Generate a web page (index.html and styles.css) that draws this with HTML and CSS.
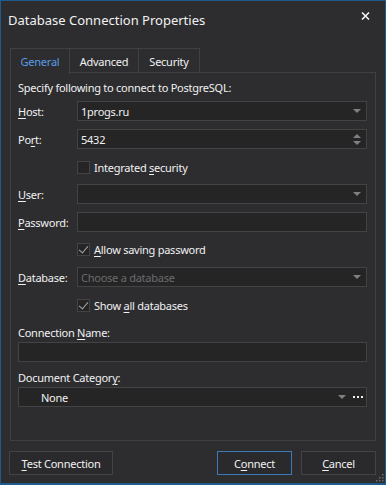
FILE: index.html
```html
<!DOCTYPE html>
<html lang="en">
<head>
    <meta charset="UTF-8">
    <meta name="viewport" content="width=device-width, initial-scale=1.0">
    <title>Database Connection Properties</title>
    <link rel="stylesheet" href="styles.css">
</head>
<body>
    <div class="window">
        <div class="titlebar">
            <span class="title">Database Connection Properties</span>
            <svg class="close" width="9" height="8" viewBox="0 0 9 8">
                <path d="M1 0.5 L8 7.5 M8 0.5 L1 7.5" stroke="#f1f1f1" stroke-width="1.6"/>
            </svg>
        </div>

        <div class="tabs">
            <div class="tab active">General</div>
            <div class="tab">Advanced</div>
            <div class="tab">Security</div>
        </div>

        <div class="panel">
            <div class="intro">Specify following to connect to PostgreSQL:</div>

            <div class="row host">
                <label class="lbl"><u>H</u>ost:</label>
                <div class="field">
                    <span class="value">1progs.ru</span>
                    <span class="arrow"></span>
                </div>
            </div>

            <div class="row port">
                <label class="lbl">Po<u>r</u>t:</label>
                <div class="field">
                    <span class="value">5432</span>
                    <span class="spin">
                        <span class="up"></span>
                        <span class="down"></span>
                    </span>
                </div>
            </div>

            <div class="row check integrated">
                <span class="box"></span>
                <span>Integrated <u>s</u>ecurity</span>
            </div>

            <div class="row user">
                <label class="lbl"><u>U</u>ser:</label>
                <div class="field">
                    <span class="value"></span>
                    <span class="arrow"></span>
                </div>
            </div>

            <div class="row password">
                <label class="lbl"><u>P</u>assword:</label>
                <div class="field"></div>
            </div>

            <div class="row check allow">
                <span class="box checked"></span>
                <span><u>A</u>llow saving password</span>
            </div>

            <div class="row database">
                <label class="lbl"><u>D</u>atabase:</label>
                <div class="field">
                    <span class="value placeholder">Choose a database</span>
                    <span class="arrow"></span>
                </div>
            </div>

            <div class="row check showall">
                <span class="box checked"></span>
                <span>Show <u>a</u>ll databases</span>
            </div>

            <div class="caption conn-label">Connection <u>N</u>ame:</div>
            <div class="field wide"></div>

            <div class="caption cat-label">Document Categor<u>y</u>:</div>
            <div class="field wide">
                <span class="value none">None</span>
                <span class="arrow"></span>
                <span class="dots"><i></i><i></i><i></i></span>
            </div>
        </div>

        <div class="buttons">
            <button class="btn test"><u>T</u>est Connection</button>
            <div class="right">
                <button class="btn primary">C<u>o</u>nnect</button>
                <button class="btn"><u>C</u>ancel</button>
            </div>
        </div>

        <svg class="grip" width="8" height="8" viewBox="0 0 8 8">
            <rect x="6" y="0" width="1.5" height="1.5" fill="#6a6a70"/>
            <rect x="3" y="3" width="1.5" height="1.5" fill="#6a6a70"/>
            <rect x="6" y="3" width="1.5" height="1.5" fill="#6a6a70"/>
            <rect x="0" y="6" width="1.5" height="1.5" fill="#6a6a70"/>
            <rect x="3" y="6" width="1.5" height="1.5" fill="#6a6a70"/>
            <rect x="6" y="6" width="1.5" height="1.5" fill="#6a6a70"/>
        </svg>
    </div>
</body>
</html>
```

FILE: styles.css
```css
* {
    box-sizing: border-box;
    margin: 0;
    padding: 0;
}

body {
    background-color: #1e5a8e;
    font-family: "Noto Sans", "Open Sans", sans-serif;
    font-size: 11px;
    letter-spacing: -0.25px;
    color: #f1f1f1;
}

u {
    text-decoration: underline;
    text-underline-offset: 2px;
}

.window {
    position: relative;
    width: 386px;
    height: 485px;
    border: 1px solid #1e5a8e;
    border-bottom-width: 2px;
    background-color: #2d2d30;
    padding: 0 9px;
}

.titlebar {
    display: flex;
    justify-content: space-between;
    height: 47px;
    padding-top: 10px;
}

.title {
    font-size: 13px;
    letter-spacing: 0;
    margin-left: -2px;
    color: #f1f1f1;
}

.close {
    margin-top: 1px;
    margin-right: 6px;
}

.tabs {
    display: flex;
    height: 25px;
}

.tab {
    height: 25px;
    padding-top: 5px;
    text-align: center;
    border: 1px solid #3f3f46;
    border-bottom: none;
    border-left: none;
    color: #f1f1f1;
}

.tab.active {
    border-left: 1px solid #3f3f46;
    width: 60px;
    color: #569de5;
    background-color: #2d2d30;
    position: relative;
    z-index: 1;
    height: 26px;
}

.tab:nth-child(2) {
    width: 69px;
}

.tab:nth-child(3) {
    width: 61px;
}

.panel {
    height: 369px;
    margin-top: -1px;
    border: 1px solid #3f3f46;
    padding: 6px 8px 0 7px;
}

.intro {
    height: 18px;
    line-height: 18px;
}

.row {
    display: flex;
    align-items: center;
}

.host { margin-top: 4px; }
.port { margin-top: 8px; }
.integrated { margin-top: 9px; }
.user { margin-top: 7px; }
.password { margin-top: 8px; }
.allow { margin-top: 8px; }
.database { margin-top: 8px; }
.showall { margin-top: 9px; }

.lbl {
    width: 59px;
    flex-shrink: 0;
}

.field {
    position: relative;
    flex: 1;
    height: 20px;
    display: flex;
    align-items: center;
    background-color: #252526;
    border: 1px solid #434346;
    padding-left: 3px;
}

.value {
    flex: 1;
}

.placeholder {
    color: #6b6b6e;
}

.arrow {
    width: 0;
    height: 0;
    border-left: 4px solid transparent;
    border-right: 4px solid transparent;
    border-top: 4px solid #808084;
    margin-right: 5px;
}

.spin {
    display: flex;
    flex-direction: column;
    gap: 3px;
    margin-right: 5px;
}

.spin .up {
    width: 0;
    height: 0;
    border-left: 4px solid transparent;
    border-right: 4px solid transparent;
    border-bottom: 4px solid #808084;
}

.spin .down {
    width: 0;
    height: 0;
    border-left: 4px solid transparent;
    border-right: 4px solid transparent;
    border-top: 4px solid #808084;
}

.check {
    height: 19px;
    padding-left: 59px;
    gap: 4px;
}

.box {
    position: relative;
    width: 13px;
    height: 13px;
    border: 1px solid #434346;
    background-color: #252526;
}

.box.checked::after {
    content: "";
    position: absolute;
    left: 3px;
    top: 0px;
    width: 4px;
    height: 8px;
    border-right: 1.5px solid #a8a8ac;
    border-bottom: 1.5px solid #a8a8ac;
    transform: rotate(40deg);
}

.caption {
    height: 18px;
    line-height: 18px;
}

.conn-label { margin-top: 9px; }
.cat-label { margin-top: 7px; }

.field.wide {
    flex: none;
    width: 100%;
}

.none {
    padding-left: 19px;
}

.dots {
    display: flex;
    gap: 2px;
    margin-right: 3px;
}

.dots i {
    width: 2px;
    height: 2px;
    background-color: #f1f1f1;
}

.field.wide .arrow {
    margin-right: 7px;
}

.buttons {
    display: flex;
    justify-content: space-between;
    margin-top: 10px;
    margin-left: -1px;
}

.right {
    display: flex;
    gap: 9px;
}

.btn {
    height: 24px;
    width: 75px;
    font-family: "Noto Sans", "Open Sans", sans-serif;
    font-size: 11px;
    letter-spacing: -0.25px;
    color: #f1f1f1;
    background-color: #2a2a2d;
    border: 1px solid #434346;
}

.btn.test {
    width: 104px;
}

.btn.primary {
    border-color: #3d7bb8;
}

.grip {
    position: absolute;
    right: 1px;
    bottom: 1px;
}
```
